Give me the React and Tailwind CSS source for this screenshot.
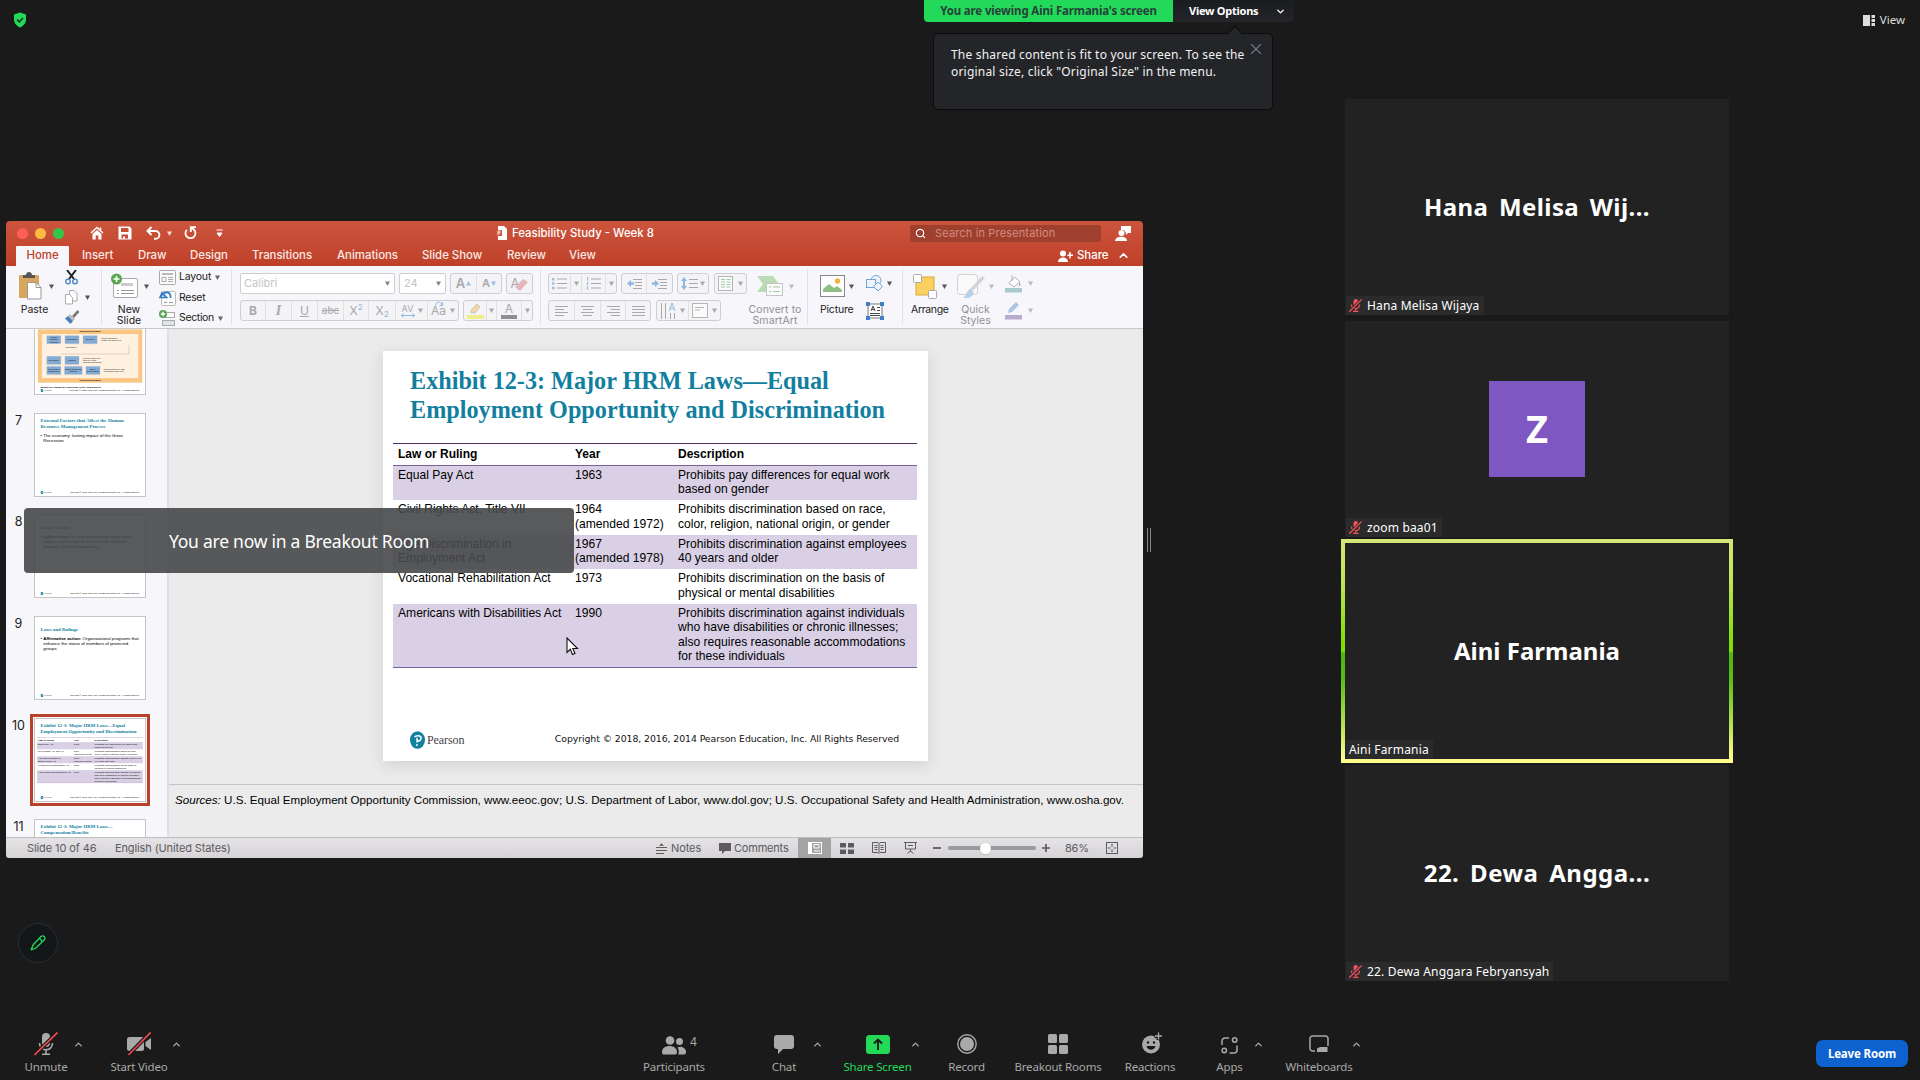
import React from "react";
import { Search, ChevronUp, ChevronDown, X } from "lucide-react";

const tabs = [
  { label: "Insert", cls: "w-[56px]" },
  { label: "Draw", cls: "w-[52px]" },
  { label: "Design", cls: "w-[62px]" },
  { label: "Transitions", cls: "w-[85px]" },
  { label: "Animations", cls: "w-[85px]" },
  { label: "Slide Show", cls: "w-[85px]" },
  { label: "Review", cls: "w-[62px]" },
  { label: "View", cls: "w-[40px]" },
];

const laws = [
  { law: ["Equal Pay Act"], year: ["1963"], desc: ["Prohibits pay differences for equal work", "based on gender"], cls: "h-[34.5px] bg-[#d9d0e6]" },
  { law: ["Civil Rights Act, Title VII"], year: ["1964", "(amended 1972)"], desc: ["Prohibits discrimination based on race,", "color, religion, national origin, or gender"], cls: "h-[34.5px]" },
  { law: ["Age Discrimination in", "Employment Act"], year: ["1967", "(amended 1978)"], desc: ["Prohibits discrimination against employees", "40 years and older"], cls: "h-[34.5px] bg-[#d9d0e6]" },
  { law: ["Vocational Rehabilitation Act"], year: ["1973"], desc: ["Prohibits discrimination on the basis of", "physical or mental disabilities"], cls: "h-[34.5px]" },
  { law: ["Americans with Disabilities Act"], year: ["1990"], desc: ["Prohibits discrimination against individuals", "who have disabilities or chronic illnesses;", "also requires reasonable accommodations", "for these individuals"], cls: "h-[63px] bg-[#d9d0e6]" },
];

const participants = [
  { title: "Hana Melisa Wij...", titleCls: "tracking-[0.400px] [word-spacing:4px]", name: "Hana Melisa Wijaya", muted: true },
  { avatar: "Z", name: "zoom baa01", muted: true },
  { title: "Aini Farmania", titleCls: "tracking-[0px]", name: "Aini Farmania", active: true },
  { title: "22. Dewa Angga...", titleCls: "tracking-[0.500px] [word-spacing:4px]", name: "22. Dewa Anggara Febryansyah", muted: true },
];

function Caret({ className = "" }) {
  return (
    <svg className={"shrink-0 " + className} width="5" height="5" viewBox="0 0 5 5">
      <path d="M0 .5h5L2.5 5z" fill="currentColor" />
    </svg>
  );
}

function Sep({ className = "" }) {
  return <div className={"w-px h-[55px] mt-[3px] shrink-0 bg-[#e1e0e4] " + className} />;
}

function Cell({ className = "", children }) {
  return <div className={"flex items-center justify-center h-full shrink-0 border-r border-[#e0e0e3] last:border-r-0 " + className}>{children}</div>;
}

function Group({ className = "", children }) {
  return <div className={"flex h-[21px] shrink-0 rounded-[3px] border border-[#cfced3] bg-[#f4f4f6] text-[#a9a9ad] " + className}>{children}</div>;
}

function Lines({ widths, className = "" }) {
  return (
    <svg className={className} width="13" height="11" viewBox="0 0 13 11" stroke="#a9a9ad" strokeWidth="1">
      {widths.map(([a, b], i) => (
        <path key={i} d={`M${a} ${i * 3 + 1}.5H${b}`} />
      ))}
    </svg>
  );
}

function PearsonLogo() {
  return (
    <div className="flex items-center">
      <svg width="15" height="18" viewBox="0 0 15 18">
        <ellipse cx="7.5" cy="9" rx="7.5" ry="8.7" fill="#12809f" />
        <path d="M4.500 6.200c1.200-2 6.600-2.300 6.600.9 0 2.400-2.200 3-4.100 2.700M7 6.800v4.600" stroke="#fff" strokeWidth="1.500" fill="none" />
        <circle cx="6.900" cy="14" r=".9" fill="#fff" />
      </svg>
      <span className="ml-[2px] font-['Liberation_Serif',serif] text-[12px] tracking-[-0.1px] text-[#444]">Pearson</span>
    </div>
  );
}

function SlideFrame({ title, top = "pt-[15px]", children }) {
  return (
    <div className="w-[545px] h-[410px] bg-white flex flex-col overflow-hidden">
      <div className={"h-[92px] pl-[27px] shrink-0 font-['Liberation_Serif',serif] font-bold text-[24.200px] leading-[29.500px] text-[#127f9f] whitespace-nowrap " + top}>
        {title.map((t) => (
          <div key={t}>{t}</div>
        ))}
      </div>
      <div className="flex-1">{children}</div>
      <div className="h-[32px] mb-[5px] pl-[27px] pr-[29px] flex items-center justify-between">
        <PearsonLogo />
        <span className="font-['DejaVu_Sans',sans-serif] text-[9.350px] tracking-[-0.080px] text-[#111] whitespace-nowrap">Copyright © 2018, 2016, 2014 Pearson Education, Inc. All Rights Reserved</span>
      </div>
    </div>
  );
}

function LawsSlide() {
  return (
    <SlideFrame title={["Exhibit 12-3: Major HRM Laws—Equal", "Employment Opportunity and Discrimination"]}>
      <div className="ml-[10px] w-[524px] font-['Liberation_Sans',sans-serif] text-[12.100px] leading-[14.500px] text-black whitespace-nowrap">
        <div className="flex items-center h-[23px] border-t border-b border-t-[#4b2c63] border-b-[#77639c] font-bold text-[12px]">
          <span className="pl-[5px] w-[182px]">Law or Ruling</span>
          <span className="w-[103px]">Year</span>
          <span>Description</span>
        </div>
        {laws.map((l) => (
          <div key={l.law[0]} className={"flex pt-[2px] " + l.cls}>
            <div className="pl-[5px] w-[182px]">{l.law.map((t) => <div key={t}>{t}</div>)}</div>
            <div className="w-[103px]">{l.year.map((t) => <div key={t}>{t}</div>)}</div>
            <div>{l.desc.map((t) => <div key={t}>{t}</div>)}</div>
          </div>
        ))}
        <div className="h-px bg-[#7b62a3]" />
      </div>
    </SlideFrame>
  );
}

function BulletSlide({ title, top, children }) {
  return (
    <SlideFrame title={title} top={top}>
      <div className="pl-[27px] flex font-['Liberation_Sans',sans-serif] text-[21.500px] leading-[26px] text-black whitespace-nowrap">
        <span className="w-[14px]">•</span>
        <div>{children}</div>
      </div>
    </SlideFrame>
  );
}

function FlowBox({ className = "w-[70px]", children }) {
  return <div className={"h-[40px] shrink-0 bg-[#84abd6] shadow-md flex items-center justify-center text-center " + className}>{children}</div>;
}

function FlowSlide() {
  return (
    <div className="w-[545px] h-[410px] bg-white flex flex-col font-['Liberation_Sans',sans-serif]">
      <div className="mt-[86px] mx-[14px] h-[264px] bg-[#fbc684] px-[20px] flex flex-col items-center text-[10px] leading-[11px]">
        <b className="h-[23px] flex items-center">External Environment</b>
        <div className="w-full h-[218px] bg-[#fef1df] flex flex-col pl-[24px] pt-[8px]">
          <div className="flex gap-[20px] items-center">
            <FlowBox>Human Resource Planning</FlowBox>
            <FlowBox>Recruitment</FlowBox>
            <FlowBox>Selection</FlowBox>
            <span>Identify and select<br />competent employees</span>
          </div>
          <div className="ml-[70px] mr-[45px] mt-[6px] h-[46px] border-r-2 border-b-2 border-[#b5a58c] pl-[24px] pt-[8px]">Decruitment</div>
          <div className="mt-[10px] flex gap-[20px] items-center">
            <FlowBox>Orientation</FlowBox>
            <FlowBox>Training</FlowBox>
            <span>Provide employees<br />with up-to-date<br />skills and knowledge</span>
          </div>
          <div className="mt-[10px] flex gap-[18px] items-center">
            <FlowBox>Performance Management</FlowBox>
            <FlowBox className="w-[88px]">Compensation and Benefits</FlowBox>
            <FlowBox>Career Development</FlowBox>
            <span>Retain competent, high-<br />performing employees</span>
          </div>
        </div>
        <b className="h-[23px] flex items-center">External Environment</b>
      </div>
      <div className="pl-[27px] mt-[12px] font-bold text-[11.500px] leading-[18px] whitespace-nowrap">Exhibit 12-1 shows the eight steps in the HRM process.</div>
      <div className="pl-[27px] pr-[28px] flex items-center justify-between">
        <PearsonLogo />
        <span className="font-['DejaVu_Sans',sans-serif] text-[9.300px] whitespace-nowrap">Copyright © 2018, 2016, 2014 Pearson Education, Inc. All Rights Reserved</span>
      </div>
    </div>
  );
}

function Thumb({ num, selected, children }) {
  return (
    <div className="h-[101.700px] flex shrink-0">
      <div className="w-[25px] text-center text-[12.500px] leading-[15px] text-[#222]">{num}</div>
      <div className={"ml-[3px] w-[112px] h-[84px] border border-[#c4c3c8] overflow-hidden " + (selected ? "outline-3 outline-offset-1 outline-[#b8412a]" : "")}>
        <div className="w-[545px] h-[410px] origin-top-left scale-[0.202]">{children}</div>
      </div>
    </div>
  );
}

function TitleBar() {
  return (
    <div className="h-[45px] rounded-t-[4px] bg-linear-to-b from-[#cc543d] to-[#bf4028] text-white">
      <div className="h-[24px] flex items-center pl-[11px]">
        <div className="flex gap-[7px] w-[73px]">
          <div className="size-[11px] rounded-full bg-[#fb5f57]" />
          <div className="size-[11px] rounded-full bg-[#fdbb40]" />
          <div className="size-[11px] rounded-full bg-[#34c648]" />
        </div>
        <svg width="14" height="14" viewBox="0 0 14 14">
          <path d="M1 7l6-5.500L13 7M10.500 1.500v3" fill="none" stroke="#fff" strokeWidth="1.500" />
          <path d="M2.500 8L7 4l4.500 4v5.500H8.300V9.500H5.700v4H2.500z" fill="#fff" />
        </svg>
        <svg className="ml-[14px]" width="14" height="14" viewBox="0 0 14 14">
          <path fillRule="evenodd" d="M.5.500h11l2 2v11H.500zM3 2v4h7.500V2zM3.500 8.500v4h1.500v-2h2v2h3v-4z" fill="#fff" />
        </svg>
        <svg className="ml-[14px]" width="15" height="14" viewBox="0 0 15 14" fill="none" stroke="#fff" strokeWidth="1.900">
          <path d="M5.500 1L1.500 5l4 4M2 5h7.500a3.800 3.800 0 0 1 0 7.800H8" />
        </svg>
        <Caret className="ml-[6px] opacity-80" />
        <svg className="ml-[12px]" width="13" height="14" viewBox="0 0 13 14" fill="none" stroke="#fff" strokeWidth="1.800">
          <path d="M2.800 3.800a5 5 0 1 0 7-.3L7.200 1.500M6.800 6V1.200H12" />
        </svg>
        <svg className="ml-[19px]" width="7" height="8" viewBox="0 0 7 8">
          <path d="M.5 1h6M1 4h5L3.500 7.500z" stroke="#fff" strokeWidth="1" fill="#fff" />
        </svg>
        <svg className="ml-[273px]" width="11" height="14" viewBox="0 0 11 14">
          <path d="M2 0h6l3 3v11H2z" fill="#fff" />
          <rect x="0" y="4" width="6" height="6" fill="#d2593f" />
          <path d="M2 9V5h2v2H2" stroke="#fff" fill="none" strokeWidth=".8" />
        </svg>
        <span className="ml-[5px] mt-[2px] w-[398px] text-[11.400px] font-medium whitespace-nowrap">Feasibility Study - Week 8</span>
        <div className="h-[17px] w-[191px] rounded-[2px] bg-[#9f3f2d] flex items-center pl-[5px]">
          <Search size={11} strokeWidth={2.500} />
          <span className="ml-[9px] text-[11px] text-[#d38d80] tracking-[0.150px] whitespace-nowrap">Search in Presentation</span>
        </div>
        <svg className="ml-[14px]" width="16" height="16" viewBox="0 0 16 16" fill="#fff">
          <path d="M6 1h10v7h-3l-2 2V8L9 5H6z" />
          <circle cx="6.500" cy="8" r="3" />
          <path d="M0 16c0-5 12-6 12 0z" />
        </svg>
      </div>
      <div className="h-[21px] flex items-center text-[11.400px] font-medium">
        <div className="ml-[10px] mt-[1px] w-[53px] h-[20px] bg-[#f7f6fa] text-[#b8412a] flex items-center justify-center rounded-t-[1px]">Home</div>
        <div className="flex ml-[13px] text-[#fbe9e5]">
          {tabs.map((t) => (
            <span key={t.label} className={"whitespace-nowrap " + t.cls}>{t.label}</span>
          ))}
        </div>
        <svg className="ml-auto" width="15" height="12" viewBox="0 0 15 12" fill="#fff">
          <circle cx="5" cy="3.500" r="3" />
          <path d="M0 12c0-6 10-6 10 0zM11.200 2h1.500v2.500H15V6h-2.300v2.500h-1.500V6H9.500V4.500h1.700z" />
        </svg>
        <span className="ml-[4px] w-[40px]">Share</span>
        <ChevronUp className="mr-[13px]" size={13} strokeWidth={3} />
      </div>
    </div>
  );
}

function BigButton({ icon, lines, className = "", labelCls = "", caretCls = "" }) {
  return (
    <div className={"pt-[5px] shrink-0 text-[10.500px] " + className}>
      <div className="h-[30px] flex items-center">
        {icon}
        <Caret className={caretCls} />
      </div>
      <div className={"mt-[3px] leading-[11px] text-center whitespace-nowrap " + labelCls}>
        {lines.map((l) => <div key={l}>{l}</div>)}
      </div>
    </div>
  );
}

function Ribbon() {
  return (
    <div className="h-[63px] flex bg-[#f7f6fa] border-b border-[#c9c9cc] text-[#222]">
      <BigButton
        className="ml-[13px] w-[37px]"
        labelCls="w-[31px]"
        caretCls="ml-[7px] text-[#555]"
        lines={["Paste"]}
        icon={
          <svg width="23" height="28" viewBox="0 0 23 28">
            <rect x="0" y="3" width="20" height="23" rx="1" fill="#d9a75c" />
            <path d="M4 6V3h3c0-4 6-4 6 0h3v3z" fill="#555" />
            <path d="M8.500 10.500h8.500l5 5V27H8.500z" fill="#fff" stroke="#999" />
            <path d="M17 10.500v5h5" fill="none" stroke="#999" />
          </svg>
        }
      />
      <div className="ml-[9px] w-[28px] pt-[1px]">
        <div className="h-[20px] flex items-center">
          <svg width="13" height="15" viewBox="0 0 13 15" fill="none">
            <path d="M2 0l7 9M11 0L4 9" stroke="#222" strokeWidth="2" />
            <circle cx="3" cy="11.500" r="2.300" stroke="#3f82c4" strokeWidth="1.300" />
            <circle cx="10" cy="11.500" r="2.300" stroke="#3f82c4" strokeWidth="1.300" />
          </svg>
        </div>
        <div className="h-[20px] flex items-center">
          <svg width="13" height="15" viewBox="0 0 13 15" fill="#fff" stroke="#aaa">
            <path d="M4.500.5H9l3 3V11H4.500z" />
            <path d="M.5 4.500h4l3 3V14H.500z" />
          </svg>
          <Caret className="ml-[7px] text-[#555]" />
        </div>
        <div className="h-[20px] flex items-center">
          <svg width="14" height="14" viewBox="0 0 14 14">
            <path d="M13.500 1L8 7" stroke="#777" strokeWidth="2.600" />
            <path d="M5 4l5 5-2 2-5-5z" fill="#bbb" />
            <path d="M3 6l5 5-2.500 3L0 8.500z" fill="#4a7ebb" />
          </svg>
        </div>
      </div>
      <Sep className="ml-[8px]" />
      <BigButton
        className="ml-[9px] w-[42px]"
        labelCls="w-[36px]"
        caretCls="ml-[5px] text-[#555]"
        lines={["New", "Slide"]}
        icon={
          <svg width="28" height="26" viewBox="0 0 28 26">
            <rect x="2.500" y="5.500" width="24" height="19" rx="1.500" fill="#fff" stroke="#aaa" />
            <path d="M10 10h12v3H10z" fill="#ccc" />
            <path d="M6 17.500h2M10 17.500h13M6 20.500h2M10 20.500h13" stroke="#999" />
            <circle cx="5.500" cy="6" r="5.500" fill="#5aa550" />
            <path d="M5.500 3v6M2.500 6h6" stroke="#fff" strokeWidth="1.700" />
          </svg>
        }
      />
      <div className="ml-[6px] w-[67px] pt-[1px] text-[10.500px]">
        <div className="h-[20px] flex items-center">
          <svg width="17" height="15" viewBox="0 0 17 15" fill="#fafafa" stroke="#aaa">
            <rect x=".5" y=".5" width="16" height="14" rx="1" />
            <path d="M3 3h11v2H3z" fill="#bbb" stroke="none" />
            <path d="M3 7.500h4v4H3zM9 7.500h5M9 9.500h5M9 11.500h5" />
          </svg>
          <span className="ml-[3px] tracking-[-0.200px]">Layout</span>
          <Caret className="ml-[4px] text-[#666]" />
        </div>
        <div className="h-[20px] mt-px flex items-center">
          <svg width="17" height="16" viewBox="0 0 17 16" fill="none">
            <rect x="2.500" y="1.500" width="14" height="14" rx="1" fill="#fafafa" stroke="#bbb" />
            <path d="M5 12.500h3M10 12.500h4" stroke="#999" />
            <path d="M1 7.500h6.500L3 3zM3.500 5.500C5 1 12 1 11.500 8" stroke="#2f7cc4" strokeWidth="1.700" fill="none" />
          </svg>
          <span className="ml-[3px] tracking-[-0.300px]">Reset</span>
        </div>
        <div className="h-[20px] flex items-center">
          <svg width="17" height="16" viewBox="0 0 17 16" fill="#fafafa" stroke="#aaa">
            <rect x="3.500" y="2.500" width="12" height="5" />
            <rect x="3.500" y="10.500" width="12" height="5" fill="#dde5e5" />
            <circle cx="4" cy="4" r="4" fill="#5aa550" stroke="none" />
            <path d="M4 1.800v4.400M1.800 4h4.400" stroke="#fff" strokeWidth="1.300" />
          </svg>
          <span className="ml-[3px] tracking-[-0.350px]">Section</span>
          <Caret className="ml-[4px] text-[#666]" />
        </div>
      </div>
      <Sep className="ml-[5px]" />

      {/* font */}
      <div className="ml-[8px] w-[293px] pt-[7px] flex flex-col gap-[6px] shrink-0">
        <div className="flex gap-[4px]">
          <div className="w-[155px] h-[21px] border border-[#cfced3] rounded-[2px] bg-white flex items-center justify-between pl-[3px] pr-[4px] text-[11px] text-[#c4c4c8]">
            Calibri<Caret className="text-[#888]" />
          </div>
          <div className="w-[47px] h-[21px] border border-[#cfced3] rounded-[2px] bg-white flex items-center justify-between pl-[4px] pr-[4px] text-[11px] text-[#c4c4c8]">
            24<Caret className="text-[#888]" />
          </div>
          <Group className="w-[52px]">
            <Cell className="w-[26px] text-[13px] font-semibold">A<Caret className="rotate-180 ml-px text-[#9dc0e2]" /></Cell>
            <Cell className="w-[24px] text-[11px] font-semibold">A<Caret className="ml-px text-[#9dc0e2]" /></Cell>
          </Group>
          <Group className="w-[27px]">
            <Cell className="w-[25px] text-[13px]">
              A
              <svg className="-ml-[4px] mt-[3px]" width="13" height="12" viewBox="0 0 13 12"><path d="M0 8L8 0l5 3-8 9z" fill="#e6b6bf" /></svg>
            </Cell>
          </Group>
        </div>
        <div className="flex gap-[4px]">
          <Group className="w-[219px] text-[12px]">
            <Cell className="w-[25px] font-bold">B</Cell>
            <Cell className="w-[26px] italic font-['Liberation_Serif',serif] text-[14px] font-bold">I</Cell>
            <Cell className="w-[26px] underline">U</Cell>
            <Cell className="w-[26px] line-through text-[10px]">abc</Cell>
            <Cell className="w-[25px]">X<span className="text-[8px] text-[#8fb6dd] -mt-[7px]">2</span></Cell>
            <Cell className="w-[27px]">X<span className="text-[8px] text-[#8fb6dd] mt-[7px]">2</span></Cell>
            <Cell className="w-[32px] gap-[3px]">
              <div className="flex flex-col items-center text-[9px] leading-[9px]">
                AV
                <svg width="14" height="5" viewBox="0 0 14 5"><path d="M0 2.500h14M2.500.500l-2 2 2 2M11.500.500l2 2-2 2" stroke="#8fb6dd" fill="none" /></svg>
              </div>
              <Caret />
            </Cell>
            <Cell className="w-[30px] gap-[4px]">
              <span className="relative">
                Aa
                <svg className="absolute -top-[1px] left-[4px]" width="8" height="5" viewBox="0 0 8 5"><path d="M.5 4.500C1 0 6 0 7 4M7.500 1v3.500H4.500" stroke="#8fb6dd" fill="none" /></svg>
              </span>
              <Caret />
            </Cell>
          </Group>
          <Group className="w-[70px]">
            <Cell className="w-[23px]">
              <svg width="17" height="16" viewBox="0 0 17 16"><path d="M0 12h17v4H0z" fill="#eff08c" /><path d="M4 7l6-6 3 3-5 6H4z" fill="#f0d6a0" stroke="#bbb" strokeWidth=".7" /></svg>
            </Cell>
            <Cell className="w-[10px]"><Caret /></Cell>
            <Cell className="w-[25px] flex-col text-[12px] leading-[12px]">A<div className="w-[16px] h-[4px] bg-[#8f8f92]" /></Cell>
            <Cell className="w-[10px]"><Caret /></Cell>
          </Group>
        </div>
      </div>
      <Sep className="ml-[7px]" />

      {/* paragraph */}
      <div className="ml-[7px] w-[200px] pt-[7px] flex flex-col gap-[6px] shrink-0">
        <div className="flex gap-[4px]">
          <Group className="w-[69px]">
            <Cell className="w-[22px]">
              <svg width="15" height="13" viewBox="0 0 15 13"><path d="M5 2h10M5 6.500h10M5 11h10" stroke="#a9a9ad" /><path d="M0 1h2.500v2.500H0zM0 5.300h2.500v2.500H0zM0 9.700h2.500v2.500H0z" fill="#9dc0e2" /></svg>
            </Cell>
            <Cell className="w-[11px]"><Caret /></Cell>
            <Cell className="w-[24px]">
              <svg width="15" height="13" viewBox="0 0 15 13"><path d="M5 2h10M5 6.500h10M5 11h10" stroke="#a9a9ad" /><path d="M1.500 0v3.500M1.500 4.700v3.500M1.500 9.300v3.500" stroke="#9dc0e2" strokeWidth="1.200" /></svg>
            </Cell>
            <Cell className="w-[10px]"><Caret /></Cell>
          </Group>
          <Group className="w-[52px]">
            <Cell className="w-[25px]">
              <svg width="15" height="11" viewBox="0 0 15 11"><path d="M6 1.500h9M8 4.500h7M8 7.500h7M6 10.500h9" stroke="#a9a9ad" /><path d="M0 5.500L4 2v2.200h3v2.600H4V9z" fill="#8fb6dd" /></svg>
            </Cell>
            <Cell className="w-[25px]">
              <svg width="15" height="11" viewBox="0 0 15 11"><path d="M6 1.500h9M8 4.500h7M8 7.500h7M6 10.500h9" stroke="#a9a9ad" /><path d="M7 5.500L3 2v2.200H0v2.600h3V9z" fill="#8fb6dd" /></svg>
            </Cell>
          </Group>
          <Group className="w-[32px]">
            <Cell className="w-[30px] gap-[2px]">
              <svg width="17" height="13" viewBox="0 0 17 13"><path d="M8 2.500h9M8 6.500h9M8 10.500h9" stroke="#a9a9ad" /><path d="M3 0l3 4H4v5h2l-3 4-3-4h2V4H0z" fill="#8fb6dd" /></svg>
              <Caret />
            </Cell>
          </Group>
          <Group className="w-[33px] ml-px">
            <Cell className="w-[31px] gap-[5px]">
              <svg width="15" height="15" viewBox="0 0 15 15" fill="#fafafa" stroke="#b5b5b8"><rect x=".5" y=".5" width="14" height="14" /><path d="M3 3.500h4M3 6h4M3 8.500h4M3 11h4M8.500 3.500h4M8.500 6h4M8.500 8.500h4M8.500 11h4" stroke="#9fcba0" /></svg>
              <Caret />
            </Cell>
          </Group>
        </div>
        <div className="flex gap-[5px]">
          <Group className="w-[103px]">
            <Cell className="w-[26px]"><Lines widths={[[0, 13], [0, 9], [0, 13], [0, 9]]} /></Cell>
            <Cell className="w-[26px]"><Lines widths={[[0, 13], [2, 11], [0, 13], [2, 11]]} /></Cell>
            <Cell className="w-[25px]"><Lines widths={[[0, 13], [4, 13], [0, 13], [4, 13]]} /></Cell>
            <Cell className="w-[24px]"><Lines widths={[[0, 13], [0, 13], [0, 13], [0, 13]]} /></Cell>
          </Group>
          <Group className="w-[65px]">
            <Cell className="w-[32px] gap-[3px]">
              <div className="relative">
                <svg width="16" height="16" viewBox="0 0 16 16" stroke="#a9a9ad"><path d="M.5 0v16M4.500 0v16M9.500 10v6M13.500 10v6" /></svg>
                <span className="absolute left-[8px] -top-[1px] text-[10px] leading-[10px] text-[#8fb6dd]">A</span>
              </div>
              <Caret />
            </Cell>
            <Cell className="w-[31px] gap-[4px]">
              <svg width="16" height="15" viewBox="0 0 16 15" fill="#fafafa" stroke="#b5b5b8"><rect x=".5" y=".5" width="15" height="14" /><path d="M3 4.500h9M3 7h5" /></svg>
              <Caret />
            </Cell>
          </Group>
        </div>
      </div>
      <BigButton
        className="w-[54px] text-[#919195] tracking-[0.100px]"
        labelCls="w-[54px]"
        caretCls="ml-[6px] text-[#bbb]"
        lines={["Convert to", "SmartArt"]}
        icon={
          <svg className="ml-[9px]" width="26" height="22" viewBox="0 0 26 22">
            <path d="M0 1h16l6 8-6 8H0l6-8z" fill="#b9dcb7" />
            <rect x="9.500" y="8.500" width="16" height="12" fill="#fafafa" stroke="#c5c5c8" />
            <path d="M12 12h2M16 12h7M12 16.500h2M16 16.500h7" stroke="#9fcba0" />
          </svg>
        }
      />
      <Sep className="ml-[5px]" />
      <BigButton
        className="ml-[12px] w-[38px]"
        labelCls="w-[32px] tracking-[-0.200px]"
        caretCls="ml-[4px] text-[#555]"
        lines={["Picture"]}
        icon={
          <svg width="25" height="22" viewBox="0 0 25 22">
            <rect x=".5" y=".5" width="24" height="21" fill="#fff" stroke="#888" />
            <path d="M3 17v-3l6-5 5 4 3-2 5 4v2z" fill="#8fbf86" />
            <circle cx="17.500" cy="6" r="2.700" fill="#f2b23e" />
          </svg>
        }
      />
      <div className="ml-[8px] w-[29px] pt-[4px]">
        <div className="h-[27px] flex items-center">
          <svg width="17" height="17" viewBox="0 0 17 17" fill="#eef4fb" stroke="#6fa3d8">
            <circle cx="10" cy="5.500" r="5" />
            <rect x=".5" y="4.500" width="9" height="8" />
            <path d="M12 7l4.500 4.500L12 16l-4.500-4.500z" />
          </svg>
          <Caret className="ml-[4px] text-[#555]" />
        </div>
        <div className="h-[27px] flex items-center">
          <svg width="18" height="18" viewBox="0 0 18 18">
            <rect x="2" y="2" width="14" height="14" fill="#fff" stroke="#777" />
            <path d="M5 9l2-5 2 5M5.500 7.500h3M11 5.500h3M11 8.500h3M4 11.500h10M4 13.500h10" stroke="#444" fill="none" />
            <path d="M0 0h4v4H0zM14 0h4v4h-4zM0 14h4v4H0zM14 14h4v4h-4z" fill="#3f7fc9" />
          </svg>
        </div>
      </div>
      <Sep className="ml-[7px]" />
      <BigButton
        className="ml-[8px] w-[38px]"
        labelCls="w-[37px] tracking-[-0.350px]"
        caretCls="ml-[5px] text-[#555]"
        lines={["Arrange"]}
        icon={
          <svg className="ml-[2px]" width="24" height="25" viewBox="0 0 24 25">
            <rect x="3" y="3" width="18" height="18" fill="#fbd05f" stroke="#d9a93c" />
            <rect x=".5" y=".5" width="8" height="8" rx="1" fill="#fff" stroke="#aaa" />
            <rect x="15.500" y="16.500" width="8" height="8" rx="1" fill="#fff" stroke="#aaa" />
          </svg>
        }
      />
      <BigButton
        className="ml-[7px] w-[40px] text-[#919195]"
        labelCls="w-[39px]"
        caretCls="ml-[3px] text-[#bbb]"
        lines={["Quick", "Styles"]}
        icon={
          <svg width="30" height="26" viewBox="0 0 30 26">
            <rect x="1.500" y="1.500" width="20" height="20" rx="3" fill="#fafafa" stroke="#d0d0d4" />
            <path d="M29 5L16 19l-3-2L26 3z" fill="#d5d5d8" />
            <path d="M14 16l4 4c-3 6-8 5-11 5 4-2 3-7 7-9z" fill="#b6d0e8" />
          </svg>
        }
      />
      <div className="ml-[9px] w-[28px] pt-[4px] text-[#bbb]">
        <div className="h-[27px] flex items-center">
          <svg width="17" height="19" viewBox="0 0 17 19"><path d="M4 9l6-6 5 5-6 5z" fill="#fff" stroke="#b0b0b5" /><path d="M7 1v6" stroke="#b0b0b5" /><path d="M14 8c2 2 2 4 0 4z" fill="#8fb6dd" /><path d="M0 14h17v4.500H0z" fill="#a9c8cf" /></svg>
          <Caret className="ml-[6px]" />
        </div>
        <div className="h-[27px] flex items-center">
          <svg width="17" height="18" viewBox="0 0 17 18"><path d="M3 11l1-4 7-7 3 3-7 7z" fill="#a9c4e4" /><path d="M0 13h17v4.500H0z" fill="#b8aad0" /></svg>
          <Caret className="ml-[6px]" />
        </div>
      </div>
    </div>
  );
}

function StatusBar() {
  return (
    <div className="h-[21px] flex items-center rounded-b-[3px] border-t border-[#bebdc0] bg-linear-to-b from-[#e5e3e6] to-[#d5d3d6] text-[11px] text-[#5c5b60] whitespace-nowrap">
      <span className="ml-[21px] w-[88px] tracking-[-0.100px]">Slide 10 of 46</span>
      <span className="tracking-[-0.120px]">English (United States)</span>
      <svg className="ml-auto" width="11" height="11" viewBox="0 0 11 11" stroke="#5c5b60"><path d="M0 4.500h11M0 7.500h11M0 10.500h8" /><path d="M3.500 2.500h4l-2-2z" fill="#5c5b60" strokeWidth=".5" /></svg>
      <span className="ml-[4px] w-[48px] tracking-[-0.100px]">Notes</span>
      <svg width="12" height="11" viewBox="0 0 12 11" fill="#5c5b60"><path d="M0 0h12v8H6l-3 3V8H0z" /></svg>
      <span className="ml-[3px] w-[64px] tracking-[-0.200px]">Comments</span>
      <div className="w-[33px] h-[20px] bg-[#a3a2a5] flex items-center justify-center">
        <svg width="14" height="12" viewBox="0 0 14 12"><rect x=".5" y=".5" width="13" height="11" fill="none" stroke="#fff" /><path d="M0 0h4v12H0z" fill="#fff" /><path d="M6 2.500h5v3.500H6zM6 9h6" stroke="#fff" fill="none" /></svg>
      </div>
      <svg className="ml-[9px]" width="14" height="11" viewBox="0 0 14 11" fill="#5c5b60"><path d="M0 0h6v4.500H0zM8 0h6v4.500H8zM0 6.500h6V11H0zM8 6.500h6V11H8z" /></svg>
      <svg className="ml-[18px]" width="14" height="12" viewBox="0 0 14 12" fill="none" stroke="#5c5b60"><path d="M.5.500h5.500l1 1 1-1h5.500v10H8l-1 1-1-1H.500zM7 1.500v9M2.500 3.500h3M2.500 5.500h3M2.500 7.500h3M8.500 3.500h3M8.500 5.500h3M8.500 7.500h3" /></svg>
      <svg className="ml-[18px]" width="13" height="12" viewBox="0 0 13 12" fill="none" stroke="#5c5b60"><path d="M0 .5h13M1.500.500v6.500h10V.500M6.500 7v3M3.500 11.500L6.500 9l3 2.500M4 3.500h5" /></svg>
      <div className="ml-[16px] w-[8px] h-[2px] bg-[#6b6a6e]" />
      <div className="ml-[7px] w-[88px] h-[4px] rounded-full bg-[#9b9a9e] flex items-center">
        <div className="ml-[32px] size-[11px] rounded-full bg-white shadow" />
      </div>
      <svg className="ml-[6px]" width="8" height="8" viewBox="0 0 8 8"><path d="M0 4h8M4 0v8" stroke="#5c5b60" strokeWidth="1.700" /></svg>
      <span className="ml-[15px] w-[41px] tracking-[-0.200px]">86%</span>
      <svg className="mr-[25px]" width="12" height="12" viewBox="0 0 12 12" fill="none" stroke="#5c5b60"><rect x=".5" y=".5" width="11" height="11" /><path d="M6 2v2.500M6 7.500V10M2 6h2.500M7.500 6H10" strokeWidth="1.200" /></svg>
    </div>
  );
}

function PowerPoint() {
  return (
    <div className="w-[1137px] h-[637px] flex flex-col font-['Inter',sans-serif] overflow-hidden">
      <TitleBar />
      <Ribbon />
      <div className="h-[508px] flex">
        <div className="w-[163px] shrink-0 bg-[#f7f6fa] border-r-2 border-[#e0dfe2] overflow-hidden">
          <div className="-mt-[18px] flex flex-col">
            <Thumb><FlowSlide /></Thumb>
            <Thumb num="7">
              <BulletSlide title={["External Factors that Affect the Human", "Resource Management Process"]}>
                The economy: lasting impact of the Great<br />Recession
              </BulletSlide>
            </Thumb>
            <Thumb num="8">
              <BulletSlide title={["Labor Unions"]} top="pt-[45px]">
                <b>Labor union:</b> an organization that represents<br />workers and seeks to protect their interests<br />through collective bargaining
              </BulletSlide>
            </Thumb>
            <Thumb num="9">
              <BulletSlide title={["Laws and Rulings"]} top="pt-[45px]">
                <b>Affirmative action:</b> Organizational programs that<br />enhance the status of members of protected<br />groups
              </BulletSlide>
            </Thumb>
            <Thumb num="10" selected><LawsSlide /></Thumb>
            <Thumb num="11">
              <BulletSlide title={["Exhibit 12-3: Major HRM Laws—", "Compensation/Benefits"]} />
            </Thumb>
          </div>
        </div>
        <div className="flex-1 flex flex-col bg-[#ebebeb]">
          <div className="h-[455px] pt-[21.500px] pl-[214px]">
            <div className="w-[545px] shadow-[0_4px_14px_rgba(90,70,100,0.16)]"><LawsSlide /></div>
          </div>
          <div className="flex-1 border-t border-[#c5c5c7] pl-[6px] pt-[6px] font-['Liberation_Sans',sans-serif] text-[11.620px] leading-[17px] text-black whitespace-nowrap">
            <i>Sources:</i> U.S. Equal Employment Opportunity Commission, www.eeoc.gov; U.S. Department of Labor, www.dol.gov; U.S. Occupational Safety and Health Administration, www.osha.gov.
          </div>
        </div>
      </div>
      <StatusBar />
    </div>
  );
}

function MutedMic() {
  return (
    <svg width="13" height="13" viewBox="0 0 13 13" fill="none">
      <rect x="4.500" y="0" width="4.500" height="7.500" rx="2.200" fill="#f0525a" />
      <path d="M2.500 5.500c0 5.500 8 5.500 8 0M6.700 9.800V12M4 12.300h5.500" stroke="#f0525a" strokeWidth="1.200" />
      <path d="M.3 12.700L12.700.5" stroke="#2a2a2a" strokeWidth="3" />
      <path d="M.3 12.700L12.700.5" stroke="#f0525a" strokeWidth="1.300" />
    </svg>
  );
}

function Tile({ p }) {
  const tile = (
    <div className="w-[384px] h-[216px] bg-[#222] relative flex items-center justify-center">
      {p.title && <span className={"text-[24px] font-bold text-white whitespace-nowrap " + p.titleCls}>{p.title}</span>}
      {p.avatar && <div className="size-[96px] pb-[2px] bg-[#7e57c2] flex items-center justify-center text-[38px] font-bold text-white">{p.avatar}</div>}
      <div className="absolute left-px bottom-0 h-[19px] bg-[#2b2b2b] flex items-center gap-[5px] pl-[3px] pr-[4px] text-[12px] tracking-[0.180px] text-white whitespace-nowrap">
        {p.muted && <MutedMic />}
        {p.name}
      </div>
    </div>
  );
  if (p.active) {
    return <div className="-m-[4px] p-[4px] bg-[linear-gradient(to_bottom,#d3e777_0%,#c3e45c_18%,#7fe000_46%,#7fe000_50%,#4fb80c_51%,#57bd12_62%,#a8dc4a_80%,#f6f98a_96%,#ffff8f_100%)]">{tile}</div>;
  }
  return tile;
}

function Tool({ label, className, icon, labelCls = "" }) {
  return (
    <div className={"flex flex-col items-center shrink-0 " + className}>
      <div className="h-[28px] flex items-center">{icon}</div>
      <span className={"mt-px text-[11.500px] tracking-[-0.180px] leading-[16px] whitespace-nowrap " + labelCls}>{label}</span>
    </div>
  );
}

function Up({ className }) {
  return (
    <div className={"w-[14px] h-[28px] flex items-center justify-center shrink-0 " + className}>
      <ChevronUp size={11} strokeWidth={3} />
    </div>
  );
}

function Toolbar() {
  return (
    <div className="h-[50px] flex text-[#a9a9a9]">
      <Tool
        className="ml-[16px] w-[60px]"
        label="Unmute"
        icon={
          <svg width="24" height="24" viewBox="0 0 24 24" fill="none">
            <rect x="8" y="1" width="8" height="14" rx="4" fill="#a9a9a9" />
            <path d="M5.500 11c0 9 13 9 13 0M12 17.500V22M8 22.200h8" stroke="#a9a9a9" strokeWidth="1.600" />
            <path d="M.5 23L23.500.500" stroke="#1a1a1a" strokeWidth="4" />
            <path d="M.5 23L23.500.500" stroke="#ee4b50" strokeWidth="1.600" />
          </svg>
        }
      />
      <Up className="-ml-[5px]" />
      <Tool
        className="ml-[20px] w-[68px]"
        label="Start Video"
        icon={
          <svg width="24" height="24" viewBox="0 0 24 24" fill="none">
            <rect x="0" y="5" width="17" height="14" rx="2.500" fill="#a9a9a9" />
            <path d="M18.500 10L24 6v12l-5.500-4z" fill="#a9a9a9" />
            <path d="M1.500 23L23.500.500" stroke="#1a1a1a" strokeWidth="4" />
            <path d="M1.500 23L23.500.500" stroke="#ee4b50" strokeWidth="1.600" />
          </svg>
        }
      />
      <Up className="-ml-[4px]" />
      <Tool
        className="ml-[457px] w-[68px]"
        label="Participants"
        icon={
          <div className="flex items-start ml-[11px]">
            <svg className="mt-[3px]" width="24" height="20" viewBox="0 0 24 20" fill="#a9a9a9">
              <circle cx="8" cy="4.500" r="4.300" />
              <circle cx="17.500" cy="5.500" r="3.500" />
              <path d="M0 16c0-8 15-8 15 0 0 2-1 2.500-2 2.500H2C1 18.500 0 18 0 16zM16 18.500h6c1.500 0 2-1 2-2.500 0-4-5-6.500-8.500-4.500 1.500 2 1.800 5 .5 7z" />
            </svg>
            <span className="ml-[4px] mt-px text-[12px] leading-[15px]">4</span>
          </div>
        }
      />
      <Tool
        className="ml-[56px] w-[40px]"
        label="Chat"
        icon={<svg width="20" height="20" viewBox="0 0 20 20" fill="#a9a9a9"><path d="M3 1h14a3 3 0 0 1 3 3v8a3 3 0 0 1-3 3H9l-5 5v-5H3a3 3 0 0 1-3-3V4a3 3 0 0 1 3-3z" /></svg>}
      />
      <Up className="ml-[6px]" />
      <Tool
        className="ml-[16px] w-[75px]"
        labelCls="text-[#23d959]"
        label="Share Screen"
        icon={
          <svg width="24" height="19" viewBox="0 0 24 19">
            <rect width="24" height="19" rx="3.500" fill="#23d959" />
            <path d="M12 15V5M8 8.500L12 4.500l4 4" stroke="#1a1a1a" strokeWidth="1.900" fill="none" />
          </svg>
        }
      />
      <Up className="-ml-[7px]" />
      <Tool
        className="ml-[22px] w-[45px]"
        label="Record"
        icon={<svg width="20" height="20" viewBox="0 0 20 20"><circle cx="10" cy="10" r="9.200" fill="none" stroke="#a9a9a9" strokeWidth="1.400" /><circle cx="10" cy="10" r="7" fill="#a9a9a9" /></svg>}
      />
      <Tool
        className="ml-[23px] w-[92px]"
        label="Breakout Rooms"
        icon={<svg width="20" height="20" viewBox="0 0 20 20" fill="#a9a9a9"><rect width="9" height="9" rx="1.500" /><rect x="11" width="9" height="9" rx="1.500" /><rect y="11" width="9" height="9" rx="1.500" /><rect x="11" y="11" width="9" height="9" rx="1.500" /></svg>}
      />
      <Tool
        className="ml-[18px] w-[56px]"
        label="Reactions"
        icon={
          <svg className="ml-[3px] -mt-[2px]" width="22" height="22" viewBox="0 0 22 22">
            <circle cx="10" cy="12.500" r="9" fill="#a9a9a9" />
            <circle cx="7" cy="10.500" r="1.200" fill="#1a1a1a" />
            <circle cx="13" cy="10.500" r="1.200" fill="#1a1a1a" />
            <path d="M5.500 14c1 5 8 5 9 0z" fill="#1a1a1a" />
            <path d="M17.500 0v8M13.500 4h8" stroke="#1a1a1a" strokeWidth="4" />
            <path d="M17.500.500v7M14 4h7" stroke="#a9a9a9" strokeWidth="1.400" />
          </svg>
        }
      />
      <Tool
        className="ml-[35px] w-[33px]"
        label="Apps"
        icon={
          <svg className="mt-[3px]" width="17" height="17" viewBox="0 0 17 17" fill="none" stroke="#a9a9a9" strokeWidth="1.500">
            <path d="M8 1H4a3 3 0 0 0-3 3v4M16 8.500V13a3 3 0 0 1-3 3H8.500" />
            <circle cx="13.700" cy="3" r="2.200" />
            <circle cx="3.300" cy="13.500" r="2.200" />
          </svg>
        }
      />
      <Up className="ml-[5px]" />
      <Tool
        className="ml-[18px] w-[72px]"
        label="Whiteboards"
        icon={
          <svg className="-mt-[1px]" width="20" height="18" viewBox="0 0 20 18" fill="none">
            <path d="M6 16H3.500a2.500 2.500 0 0 1-2.500-2.500V3.500A2.500 2.500 0 0 1 3.500 1h13A2.500 2.500 0 0 1 19 3.500V11" stroke="#a9a9a9" strokeWidth="1.500" />
            <path d="M8 13.500l3-1.500h7.500v5H8z" fill="#a9a9a9" />
          </svg>
        }
      />
      <Up className="-ml-[6px]" />
      <button className="ml-auto mr-[12px] mt-[10px] w-[92px] h-[27px] rounded-[7px] bg-[#0e62cf] text-white text-[11.500px] tracking-[-0.150px] font-bold whitespace-nowrap">Leave Room</button>
    </div>
  );
}

export default function App() {
  return (
    <div className="relative w-[1920px] h-[1080px] bg-[#1a1a1a] overflow-hidden flex flex-col font-['Noto_Sans',sans-serif]">
      <header className="h-[40px] flex items-start shrink-0">
        <div className="ml-[10px] mt-[10px] size-[20px] rounded-[4px] flex items-center justify-center">
          <svg width="14" height="16" viewBox="0 0 14 16">
            <path d="M7 .5l6 2v5c0 4-3 6.500-6 8-3-1.500-6-4-6-8v-5z" fill="#23d959" />
            <path d="M4 7.500l2.300 2.300L10 6" stroke="#14321d" strokeWidth="1.600" fill="none" />
          </svg>
        </div>
        <div className="ml-[894px] flex h-[22px] rounded-b-[4px] overflow-hidden text-[11.500px] font-bold whitespace-nowrap">
          <div className="w-[249px] bg-[#23d959] text-[#26423a] flex items-center justify-center tracking-[-0.150px]">You are viewing Aini Farmania's screen</div>
          <div className="w-[121px] bg-linear-to-b from-[#1b1c20] to-[#24252a] text-white flex items-center pl-[16px]">
            <span className="w-[86px] text-[11px] tracking-[-0.250px]">View Options</span>
            <ChevronDown size={11} strokeWidth={3} />
          </div>
        </div>
        <div className="ml-auto mr-[15px] mt-[12px] flex items-center gap-[5px] text-[11.500px] leading-[16px] text-[#ddd]">
          <svg width="12" height="11" viewBox="0 0 12 11" fill="#ddd"><path d="M0 0h7v11H0zM8.500 0H12v3H8.500zM8.500 4H12v3H8.500zM8.500 8H12v3H8.500z" /></svg>
          View
        </div>
      </header>

      <main className="h-[990px] flex">
        <div className="pl-[6px] pt-[181px]">
          <PowerPoint />
        </div>
        <div className="ml-[4px] mt-[488px] w-[4px] h-[24px] border-l border-r border-[#8a8a8a]" />
        <div className="ml-[194px] pt-[59px] flex flex-col gap-[6px]">
          {participants.map((p) => <Tile key={p.name} p={p} />)}
        </div>
      </main>

      <Toolbar />

      {/* screen size tip */}
      <div className="absolute left-[933px] top-[33px] w-[340px] h-[77px] rounded-[5px] bg-[#242529] border border-[#0b0b0c]">
        <div className="absolute left-[295px] -top-[6px] size-[12px] rotate-45 bg-[#242529] border-l border-t border-[#0b0b0c]" />
        <p className="relative ml-[17px] mt-[12px] text-[12px] leading-[17px] text-[#f2f2f2] whitespace-nowrap tracking-[0.200px]">
          The shared content is fit to your screen. To see the<br />original size, click "Original Size" in the menu.
        </p>
        <X className="absolute left-[313px] top-[6px] text-[#77778c]" size={18} strokeWidth={1.500} />
      </div>

      {/* breakout toast */}
      <div className="absolute left-[24px] top-[508px] w-[550px] h-[65px] rounded-[4px] bg-[#464849]/90 flex items-center pl-[145px] text-[17.500px] tracking-[-0.250px] text-white whitespace-nowrap">
        <span className="mt-[2px]">You are now in a Breakout Room</span>
      </div>

      {/* annotate button */}
      <div className="absolute left-[18px] top-[923px] size-[40px] rounded-full bg-[#13171a] border border-[#2a2c33] flex items-center justify-center">
        <svg width="16" height="16" viewBox="0 0 16 16" fill="none" stroke="#23d959" strokeWidth="1.300">
          <path d="M11 1.500c1-1 2.500-.8 3.300.2s.8 2.200 0 3L6 13l-4.800 1.800L3 10z" strokeLinejoin="round" />
          <path d="M9.500 3.500l3 3" />
        </svg>
      </div>

      {/* pointer */}
      <svg className="absolute left-[566px] top-[637px]" width="13" height="19" viewBox="0 0 13 19">
        <path d="M1 1v14.500l3.300-3.200 2.200 5.200 2.500-1-2.200-5H11.500z" fill="#fff" stroke="#111" strokeWidth="1.100" />
      </svg>
    </div>
  );
}
